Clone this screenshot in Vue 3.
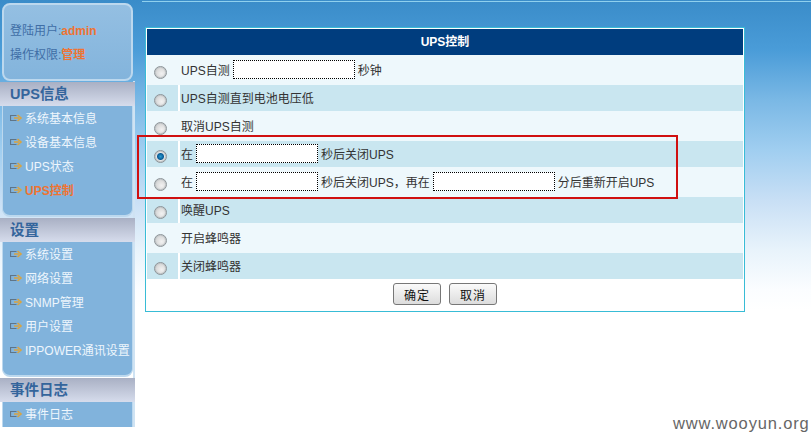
<script setup>
const groups = [
  { title: 'UPS信息', items: [['系统基本信息'], ['设备基本信息'], ['UPS状态'], ['UPS控制', true]] },
  { title: '设置', items: [['系统设置'], ['网络设置'], ['SNMP管理'], ['用户设置'], ['IPPOWER通讯设置']] },
  { title: '事件日志', items: [['事件日志']], last: true }
]
const rows = [
  { parts: ['UPS自测', 0, '秒钟'] },
  { parts: ['UPS自测直到电池电压低'] },
  { parts: ['取消UPS自测'] },
  { parts: ['在', 0, '秒后关闭UPS'], checked: true },
  { parts: ['在', 0, '秒后关闭UPS，再在', 0, '分后重新开启UPS'] },
  { parts: ['唤醒UPS'] },
  { parts: ['开启蜂鸣器'] },
  { parts: ['关闭蜂鸣器'] }
]
</script>

<template>
  <div class="page">
    <aside class="side">
      <div class="user">
        <p>登陆用户:<b>admin</b></p>
        <p>操作权限:<b>管理</b></p>
      </div>
      <section v-for="g in groups" :key="g.title">
        <h3>{{ g.title }}</h3>
        <ul :class="{ last: g.last }">
          <li v-for="it in g.items" :key="it[0]" :class="{ on: it[1] }">
            <svg width="14" height="8" viewBox="0 0 14 8">
              <path d="M6.5 1.5H.5v5h6" fill="none" stroke="#5f7588" stroke-width="1.2" />
              <path d="M4 4h5M7.5 1l3.5 3-3.5 3" fill="none" stroke="#d9a441" stroke-width="1.6" />
            </svg>
            <span>{{ it[0] }}</span>
          </li>
        </ul>
      </section>
    </aside>
    <main class="main">
      <div class="box">
        <div class="head">UPS控制</div>
        <div v-for="(r, i) in rows" :key="i" class="row" :class="i % 2 ? 'dark' : 'light'">
          <div class="cell-radio"><i class="radio" :class="{ checked: r.checked }"></i></div>
          <div class="cell-text">
            <template v-for="(p, j) in r.parts" :key="j">
              <span v-if="p === 0" class="field"></span>
              <span v-else class="txt">{{ p }}</span>
            </template>
          </div>
        </div>
        <div class="btns">
          <button>确定</button>
          <button>取消</button>
        </div>
      </div>
    </main>
    <div class="mark"></div>
    <div class="wm">www.wooyun.org</div>
  </div>
</template>

<style scoped>
.page {
  position: relative;
  display: flex;
  width: 811px;
  height: 433px;
  overflow: hidden;
  font: 12px "Liberation Sans", "Noto Sans CJK SC", sans-serif;
  background: linear-gradient(#3a8cc9 0, #4a9cd8 50px, #7ab8e5 100px, #a0cef0 150px, #c8dff5 200px, #e8f3fb 250px, #fbfdff 290px, #fff 310px);
}
.side {
  width: 135px;
  height: 427px;
  flex: none;
  overflow: hidden;
  padding-top: 3px;
  box-sizing: border-box;
  background: linear-gradient(90deg, transparent 133px, #cfe3f3 133px) 0 81px no-repeat;
}
.user {
  width: 131px;
  height: 78px;
  margin-left: 2px;
  box-sizing: border-box;
  padding-top: 14px;
  padding-left: 6px;
  border: 2px solid #bcd8ee;
  border-radius: 8px;
  background: linear-gradient(#94bfe2, #83b4dc);
  color: #3f6ea6;
}
.user p {
  margin: 0;
  height: 24px;
  line-height: 24px;
  white-space: nowrap;
}
.user b {
  color: #ee7433;
}
h3 {
  margin: 1px 0 0;
  width: 135px;
  height: 24px;
  box-sizing: border-box;
  padding-left: 10px;
  line-height: 25px;
  font-size: 14.5px;
  font-weight: bold;
  color: #34659c;
  background: linear-gradient(#a9b0c4, #d6dcec);
}
ul {
  list-style: none;
  margin: 0 0 0 2px;
  padding: 0 0 13px;
  width: 131px;
  box-sizing: border-box;
  background: #81b3dc;
  border: solid #bcd8ee;
  border-width: 0 1px 2px;
  border-radius: 0 0 8px 8px;
}
ul.last {
  border-radius: 0;
}
li {
  display: flex;
  align-items: center;
  height: 24px;
  box-sizing: border-box;
  padding: 0 0 1px 7px;
  color: #eef6fd;
  white-space: nowrap;
}
li svg {
  width: 14px;
  flex: none;
  margin-right: 1px;
}
li.on {
  color: #ee7433;
  font-weight: bold;
}
.main {
  flex: 1;
  padding: 27px 0 0 10px;
  background: linear-gradient(#8fd0ee, #8fd0ee) 7px 1px / 100% 1px no-repeat;
}
.box {
  width: 600px;
  height: 285px;
  box-sizing: border-box;
  border: 1px solid #38bcd6;
  padding: 1px;
  background: #fff;
}
.head {
  height: 26px;
  line-height: 26px;
  text-align: center;
  font-weight: bold;
  color: #fff;
  background: #003d7e;
}
.row {
  display: flex;
  color: #333;
}
.light {
  height: 30px;
  background: #eef8fc;
}
.dark {
  height: 26px;
}
.cell-radio {
  width: 31px;
  margin-right: 2px;
  padding-left: 7px;
  box-sizing: border-box;
  flex: none;
}
.cell-text {
  flex: 1;
  display: flex;
  align-items: center;
  white-space: pre;
  padding: 0 0 1px 1px;
}
.dark .cell-radio,
.dark .cell-text {
  background: #c9e6f0;
}
.txt {
  margin-bottom: 1px;
}
.radio {
  display: block;
  width: 13px;
  height: 13px;
  box-sizing: border-box;
  margin-top: 11px;
  border-radius: 50%;
  border: 1px solid #8d9498;
  box-shadow: inset 0 0 0 1px #c4c8ca;
  background: radial-gradient(circle at 60% 60%, #f2f2f2, #c8c8c8);
}
.dark .radio {
  margin-top: 9px;
}
.radio.checked {
  background: radial-gradient(circle, #2a9bd0 0, #0b5c96 3px, #e8e8e8 4px, #cfcfcf 6px);
}
.field {
  width: 122px;
  height: 19px;
  margin: 0 3px;
  box-sizing: border-box;
  border: 1px dotted #000;
  background: #fff;
}
.btns {
  display: flex;
  justify-content: center;
  gap: 8px;
  padding-top: 4px;
}
button {
  width: 48px;
  height: 22px;
  padding: 0;
  border: 1px solid #777;
  border-radius: 3px;
  background: linear-gradient(#fafafa, #dcdcdc);
  font: 12px "Liberation Sans", "Noto Sans CJK SC", sans-serif;
  letter-spacing: 1px;
  color: #111;
}
.mark {
  position: absolute;
  left: 137px;
  top: 135px;
  width: 541px;
  height: 64px;
  box-sizing: border-box;
  border: 2px solid #d01010;
}
.wm {
  position: absolute;
  left: 673px;
  top: 414px;
  font: 16.5px "Liberation Sans", sans-serif;
  letter-spacing: 0.85px;
  color: #666;
}
</style>
